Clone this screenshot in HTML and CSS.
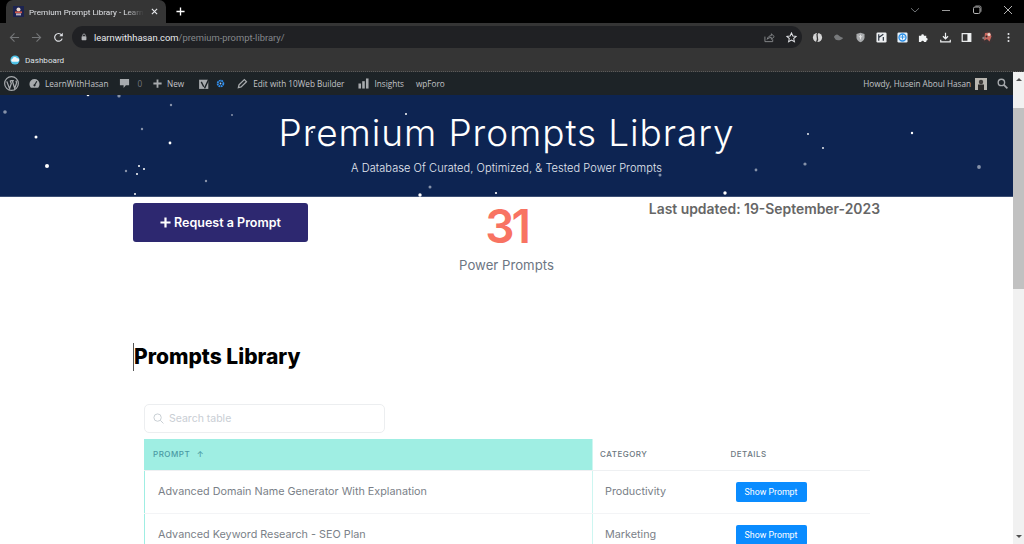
FILE: index.html
```html
<!DOCTYPE html>
<html lang="en">
<head>
  <meta charset="UTF-8">
  <meta name="viewport" content="width=device-width, initial-scale=1.0">
  <title>Premium Prompt Library - LearnWithHasan</title>
  <link rel="stylesheet" href="styles.css">
</head>
<body>
  <!-- browser chrome -->
  <div class="tabstrip">
    <div class="tab">
      <svg class="favicon" viewBox="0 0 11 11"><rect width="11" height="11" fill="#1c2350"/><circle cx="5.5" cy="3.6" r="2" fill="#e8d9d0"/><rect x="2" y="5.4" width="7" height="1.8" fill="#d0584a"/><rect x="3" y="7.4" width="5" height="2" fill="#b9b4c4"/></svg>
      <span class="tab-title">Premium Prompt Library - Learn</span>
      <svg class="tab-close" viewBox="0 0 8 8"><path d="M1 1l6 6M7 1L1 7" stroke="#e8eaed" stroke-width="1.3"/></svg>
    </div>
    <svg class="new-tab" viewBox="0 0 10 10"><path d="M5 .5v9M.5 5h9" stroke="#fff" stroke-width="1.5"/></svg>
    <div class="window-btns">
      <svg class="win-btn" viewBox="0 0 10 10"><path d="M1 3.2l4 3.8 4-3.8" fill="none" stroke="#6f7275" stroke-width="1"/></svg>
      <svg class="win-btn" viewBox="0 0 10 10"><path d="M1 5.5h8" stroke="#9a9a9a" stroke-width="1"/></svg>
      <svg class="win-btn" viewBox="0 0 10 10"><rect x="1.5" y="2" width="6.5" height="6.5" rx="1.4" fill="none" stroke="#b5b5b5" stroke-width="1"/><path d="M3.4 1h4.4A1.3 1.3 0 0 1 9 2.3v4.4" fill="none" stroke="#b5b5b5" stroke-width=".8"/></svg>
      <svg class="win-btn" viewBox="0 0 10 10"><path d="M1 1l8 8M9 1L1 9" stroke="#b5b5b5" stroke-width="1"/></svg>
    </div>
  </div>

  <div class="toolbar">
    <div class="nav-btns">
      <svg class="nav-btn" viewBox="0 0 12 12"><path d="M11 6H1.5M6 1.5L1.5 6 6 10.5" fill="none" stroke="#747678" stroke-width="1.2"/></svg>
      <svg class="nav-btn" viewBox="0 0 12 12"><path d="M1 6h9.5M6 1.5L10.5 6 6 10.5" fill="none" stroke="#747678" stroke-width="1.2"/></svg>
      <svg class="nav-btn" viewBox="0 0 12 12"><path d="M10 7.2A4.2 4.2 0 1 1 9.3 3.2" fill="none" stroke="#dfe1e5" stroke-width="1.3"/><path d="M10.7 .8v3.8H6.9z" fill="#dfe1e5"/></svg>
    </div>
    <div class="omnibox">
      <svg class="lock" viewBox="0 0 8 10"><rect x=".8" y="4" width="6.4" height="5.2" rx=".8" fill="#b4b6b9"/><path d="M2.2 4V2.8a1.8 1.8 0 0 1 3.6 0V4" fill="none" stroke="#b4b6b9"/></svg>
      <span class="url"><span class="url-host">learnwithhasan.com</span>/premium-prompt-library/</span>
      <svg class="omni-icon" viewBox="0 0 12 12"><path d="M1 5v5.5h8.5V8" fill="none" stroke="#8a8c8f" stroke-width="1"/><path d="M3.5 8C4 5.3 6 4 8 4V2l3.2 3L8 8V6C6 6 4.6 6.6 3.5 8z" fill="none" stroke="#8a8c8f" stroke-width="1"/></svg>
      <svg class="omni-icon" viewBox="0 0 12 12"><path d="M6 1l1.5 3.3 3.6.4-2.7 2.4.8 3.5L6 8.8l-3.2 1.8.8-3.5L.9 4.7l3.6-.4z" fill="none" stroke="#dfe1e5" stroke-width="1.1"/></svg>
    </div>
    <div class="ext-icons">
      <svg class="ext" viewBox="0 0 12 12"><circle cx="6" cy="6" r="5" fill="#d5d5d5"/><path d="M6.500 1C3 3.500 8.500 6 5 11" fill="none" stroke="#353535" stroke-width="1.400"/></svg>
      <svg class="ext" viewBox="0 0 12 12"><path d="M1 5.500C2 3 4.500 2 6 3.500 7.500 5 10 6 11 6.500 9.500 9 5 9.500 3 8.500z" fill="#77797b"/></svg>
      <svg class="ext" viewBox="0 0 12 12"><path d="M6 .8l4.400 1.500v3.500C10.400 8.500 8.500 10.300 6 11.200 3.500 10.300 1.600 8.500 1.600 5.800V2.300z" fill="#a9abad"/><path d="M6 3v5M4 4.500l2 1.500 2-1.500" fill="none" stroke="#e6e6e6"/></svg>
      <svg class="ext" viewBox="0 0 12 12"><rect x=".5" y=".5" width="11" height="11" rx="1.500" fill="#eceef0"/><path d="M3 2.500v7M3 6l5-3.500M8 9.500V5.500" fill="none" stroke="#2c3440" stroke-width="1.300"/></svg>
      <svg class="ext" viewBox="0 0 12 12"><rect x=".5" y=".5" width="11" height="11" rx="1.500" fill="#e8f2fb"/><circle cx="6" cy="6" r="3.800" fill="none" stroke="#2b8fe6" stroke-width="1.500"/><path d="M3.500 5.500h5M6 3v5" stroke="#2b8fe6"/></svg>
      <svg class="ext" viewBox="0 0 12 12"><path d="M1 4h2.500a1.500 1.500 0 1 1 3 0H9v2.500a1.500 1.500 0 1 1 0 3V11H6.500a1.500 1.500 0 1 0-3 0H1z" fill="#f1f3f4"/></svg>
      <svg class="ext" viewBox="0 0 12 12"><path d="M6 .8v6.400M3.200 4.600L6 7.400l2.800-2.800M.8 8.500v2.200h10.400V8.500" fill="none" stroke="#eef0f1" stroke-width="1.300"/></svg>
      <svg class="ext" viewBox="0 0 12 12"><rect x="1.300" y="1.800" width="9.400" height="8.400" fill="none" stroke="#f1f3f4" stroke-width="1.300"/><rect x="7" y="1.800" width="3.700" height="8.400" fill="#f1f3f4"/></svg>
      <svg class="ext ext-avatar" viewBox="0 0 14 14"><circle cx="7" cy="7" r="7" fill="#3a3435"/><path d="M5 3l5-.5 1.500 4-2 5-2.500-2.500-3 1.500z" fill="#c9685f"/><circle cx="9" cy="4.500" r="1.500" fill="#e8d5cc"/><circle cx="3.500" cy="8" r="1.200" fill="#8a8184"/><circle cx="6.500" cy="6.500" r="1" fill="#2b2627"/></svg>
      <svg class="ext" viewBox="0 0 12 12"><circle cx="6" cy="2.200" r="1.100" fill="#e8eaed"/><circle cx="6" cy="6" r="1.100" fill="#e8eaed"/><circle cx="6" cy="9.800" r="1.100" fill="#e8eaed"/></svg>
    </div>
  </div>

  <div class="bookmarks">
    <svg class="bm-icon" viewBox="0 0 12 12"><circle cx="6" cy="6" r="5.500" fill="#4fc3e8"/><path d="M2.500 8a1.800 1.800 0 0 1 .5-3.400A2.800 2.800 0 0 1 8.300 4a2 2 0 0 1 1.200 4z" fill="#f4f6f8"/></svg>
    <span>Dashboard</span>
  </div>

  <div class="viewport">
    <div class="site">
      <!-- wp admin bar -->
      <div class="adminbar">
        <div class="ab-group">
          <svg class="ab-wp" viewBox="0 0 14 14"><circle cx="7" cy="7" r="6.400" fill="none" stroke="#a7aaad" stroke-width="1.100"/><path d="M2.600 5l2.600 6.800L6.800 7 5.700 4.300M6 4.300h3.200M7.700 4.300l2.300 7.300 1.600-4.800c.3-1-.1-1.800-.5-2.500" fill="none" stroke="#a7aaad" stroke-width="1.200"/></svg>
          <svg class="ab-icon ab-gauge" viewBox="0 0 12 12"><path d="M2 10.500a5.500 5.500 0 1 1 8 0z" fill="#a7aaad"/><path d="M6 8L8.500 3.500" stroke="#1d2327" stroke-width="1.200"/><circle cx="6" cy="8" r="1.200" fill="#1d2327"/></svg>
          <span class="ab-text">LearnWithHasan</span>
          <svg class="ab-icon ab-comment" viewBox="0 0 12 12"><path d="M1 1h10v7H7.500L5 11V8H1z" fill="#a7aaad"/></svg>
          <span class="ab-text ab-count">0</span>
          <svg class="ab-icon ab-plus" viewBox="0 0 12 12"><path d="M6 1.500v9M1.500 6h9" stroke="#a7aaad" stroke-width="2"/></svg>
          <span class="ab-text">New</span>
          <svg class="ab-icon ab-yoast" viewBox="0 0 12 12"><path d="M1 2.500h8.500V11H1z" fill="#a7aaad"/><path d="M3 4.500L5.300 9M10.500 .8L6 10.500" fill="none" stroke="#1d2327" stroke-width="1.300"/></svg>
          <svg class="ab-icon ab-gear" viewBox="0 0 10 10"><circle cx="5" cy="5" r="3.200" fill="none" stroke="#2f8ff0" stroke-width="2" stroke-dasharray="2 .6"/><circle cx="5" cy="5" r="1" fill="#9cc9f7"/></svg>
          <svg class="ab-icon ab-pencil" viewBox="0 0 12 12"><path d="M1.500 10.500l.7-3L8 1.700l2.300 2.300-5.800 5.800z" fill="none" stroke="#a7aaad" stroke-width="1.400"/></svg>
          <span class="ab-text">Edit with 10Web Builder</span>
          <svg class="ab-icon ab-bars" viewBox="0 0 12 12"><rect x=".5" y="6" width="2.800" height="5.500" fill="#a7aaad"/><rect x="4.600" y="3.500" width="2.800" height="8" fill="#a7aaad"/><rect x="8.700" y=".5" width="2.800" height="11" fill="#a7aaad"/></svg>
          <span class="ab-text">Insights</span>
          <span class="ab-text ab-forum">wpForo</span>
        </div>
        <div class="ab-group">
          <span class="ab-text">Howdy, Husein Aboul Hasan</span>
          <svg class="ab-avatar" viewBox="0 0 12 12"><rect width="12" height="12" fill="#b9b6b0"/><circle cx="6" cy="4" r="2.200" fill="#3d3a38"/><rect x="3" y="6.500" width="6" height="5.500" fill="#2b2928"/></svg>
          <svg class="ab-search" viewBox="0 0 12 12"><circle cx="4.800" cy="4.800" r="3.500" fill="none" stroke="#a7aaad" stroke-width="1.500"/><path d="M7.500 7.500l3.800 3.800" stroke="#a7aaad" stroke-width="1.900"/></svg>
        </div>
      </div>

      <!-- hero -->
      <header class="hero">
        <svg class="stars" viewBox="0 95 1013 102">
          <g fill="#fff">
            <circle cx="36" cy="137" r="1.500"/><circle cx="47" cy="166" r="2"/><circle cx="88" cy="95" r="1.300"/>
            <circle cx="170" cy="143" r="1.400"/><circle cx="139" cy="166" r="1"/><circle cx="144" cy="169" r="1"/>
            <circle cx="137" cy="174" r="1"/><circle cx="135" cy="194" r="1"/><circle cx="312" cy="132" r="1"/>
            <circle cx="406" cy="114" r="1"/><circle cx="420" cy="195" r="1.700"/><circle cx="496" cy="193" r="1.100"/>
            <circle cx="725" cy="193" r="1.700"/><circle cx="912" cy="133" r="1.200"/><circle cx="823" cy="148" r=".9"/>
            <circle cx="808" cy="134" r=".9"/>
          </g>
          <g fill="#fff" opacity=".5">
            <circle cx="5" cy="112" r="1.800"/><circle cx="119" cy="96" r="1.600"/><circle cx="126" cy="171" r="1.200"/>
            <circle cx="171" cy="105" r="1.200"/><circle cx="232" cy="115" r="1"/><circle cx="142" cy="129" r="1.200"/>
            <circle cx="206" cy="181" r="1.200"/><circle cx="430" cy="187" r="1.500"/><circle cx="660" cy="175" r="1.500"/>
            <circle cx="756" cy="170" r="1.400"/><circle cx="805" cy="164" r="1.600"/><circle cx="979" cy="167" r="1.900"/>
            <circle cx="403" cy="170" r="1"/>
          </g>
        </svg>
        <h1 class="hero-title">Premium Prompts Library</h1>
        <p class="hero-sub">A Database Of Curated, Optimized, &amp; Tested Power Prompts</p>
      </header>

      <main class="content">
        <section class="stats">
          <div class="stats-left">
            <a class="request-btn" href="#">
              <svg class="request-plus" viewBox="0 0 12 12"><path d="M6 .5v11M.5 6h11" stroke="#fff" stroke-width="2.400"/></svg>
              Request a Prompt
            </a>
          </div>
          <div class="stats-mid">
            <div class="count">31</div>
            <div class="count-label">Power Prompts</div>
          </div>
          <div class="stats-right">Last updated: 19-September-2023</div>
        </section>

        <h2 class="lib-title">Prompts Library</h2>

        <section class="table-wrap">
          <div class="search">
            <svg class="search-icon" viewBox="0 0 12 12"><circle cx="5" cy="5" r="4" fill="none" stroke="#c4cad0" stroke-width="1"/><path d="M8 8l3.400 3.400" stroke="#c4cad0" stroke-width="1"/></svg>
            <span>Search table</span>
          </div>
          <table class="prompts">
            <thead>
              <tr>
                <th class="col-prompt">PROMPT <span class="sort">↑</span></th>
                <th class="col-cat">CATEGORY</th>
                <th class="col-det">DETAILS</th>
              </tr>
            </thead>
            <tbody>
              <tr>
                <td class="col-prompt">Advanced Domain Name Generator With Explanation</td>
                <td class="col-cat">Productivity</td>
                <td class="col-det"><a class="show-btn" href="#">Show Prompt</a></td>
              </tr>
              <tr>
                <td class="col-prompt">Advanced Keyword Research - SEO Plan</td>
                <td class="col-cat">Marketing</td>
                <td class="col-det"><a class="show-btn" href="#">Show Prompt</a></td>
              </tr>
            </tbody>
          </table>
        </section>
      </main>
    </div>

    <div class="scrollbar">
      <span class="arrow-up"></span>
      <div class="thumb"></div>
      <span class="arrow-down"></span>
    </div>
  </div>
</body>
</html>
```

FILE: styles.css
```css
* {
  box-sizing: border-box;
}
html, body {
  height: 100%;
}
body {
  margin: 0;
  height: 544px;
  overflow: hidden;
  display: flex;
  flex-direction: column;
  background: #fff;
  font-family: "Inter", "Liberation Sans", sans-serif;
}

/* Browser chrome */
.tabstrip {
  height: 23px;
  flex: none;
  background: #000;
  display: flex;
  align-items: flex-end;
  padding-left: 6px;
}
.tab {
  width: 160px;
  height: 23px;
  background: #353535;
  border-radius: 7px 7px 0 0;
  display: flex;
  align-items: center;
  padding: 0 7px;
  color: #dfe1e5;
  font-family: "Roboto", sans-serif;
  font-size: 8.1px;
}
.favicon {
  width: 11px;
  height: 11px;
  margin-right: 5px;
  flex: none;
}
.tab-title {
  flex: 1;
  white-space: nowrap;
  -webkit-mask-image: linear-gradient(to right, #000 84%, transparent 100%);
  mask-image: linear-gradient(to right, #000 84%, transparent 100%);
}
.tab-close {
  width: 7px;
  height: 7px;
  margin: 0 1px 0 7px;
  flex: none;
}
.new-tab {
  width: 9px;
  height: 9px;
  margin: 0 0 7px 10px;
}
.window-btns {
  margin-left: auto;
  display: flex;
  height: 23px;
  align-items: center;
  padding-bottom: 3px;
  padding-right: 11px;
  gap: 21px;
}
.win-btn {
  width: 10px;
  height: 10px;
}
.toolbar {
  height: 25px;
  flex: none;
  background: #353535;
  display: flex;
  align-items: flex-end;
}
.nav-btns {
  width: 72px;
  height: 22px;
  display: flex;
  align-items: center;
  padding-left: 9px;
  gap: 11px;
}
.nav-btn {
  width: 11px;
  height: 11px;
}
.omnibox {
  width: 730px;
  height: 22px;
  background: #202124;
  border-radius: 11px;
  display: flex;
  align-items: center;
  padding: 0 5px 0 9px;
}
.lock {
  width: 6px;
  height: 8px;
  flex: none;
}
.url {
  margin-left: 7px;
  flex: 1;
  font-family: "Roboto", sans-serif;
  font-size: 9.4px;
  color: #85888c;
}
.url-host {
  color: #e8eaed;
}
.omni-icon {
  width: 11px;
  height: 11px;
  margin-left: 11px;
}
.ext-icons {
  flex: 1;
  height: 22px;
  display: flex;
  align-items: center;
  padding-left: 10px;
  gap: 10.300px;
}
.ext {
  width: 11px;
  height: 11px;
  flex: none;
}
.ext-avatar {
  width: 14px;
  height: 14px;
  margin: 0 -2px;
}
.bookmarks {
  height: 24px;
  flex: none;
  background: #353535;
  border-bottom: 1px dotted #5a5a5a;
  display: flex;
  align-items: center;
  padding-left: 10px;
  gap: 5px;
  color: #dfe1e5;
  font-family: "Roboto", sans-serif;
  font-size: 8.1px;
}
.bm-icon {
  width: 10px;
  height: 10px;
}

/* Page area + scrollbar */
.viewport {
  flex: 1;
  display: flex;
  min-height: 0;
}
.site {
  flex: 1;
  min-width: 0;
  overflow: hidden;
}
.scrollbar {
  width: 11px;
  flex: none;
  background: #f1f1f1;
  display: flex;
  flex-direction: column;
  align-items: center;
  padding: 6px 0;
}
.arrow-up, .arrow-down {
  width: 0;
  height: 0;
  border-left: 3px solid transparent;
  border-right: 3px solid transparent;
  flex: none;
}
.arrow-up {
  border-bottom: 3px solid #505050;
}
.arrow-down {
  border-top: 3px solid #505050;
  margin-top: auto;
}
.thumb {
  width: 100%;
  height: 181px;
  margin-top: 27px;
  background: #c1c1c1;
}

/* WP admin bar */
.adminbar {
  height: 23px;
  background: #1d2327;
  display: flex;
  align-items: center;
  justify-content: space-between;
  padding: 0 4px;
  color: #c3c4c7;
  font-family: "Open Sans", sans-serif;
  font-size: 8.2px;
}
.ab-group {
  display: flex;
  align-items: center;
}
.ab-text {
  white-space: nowrap;
}
.ab-wp {
  width: 15px;
  height: 15px;
}
.ab-icon {
  width: 11px;
  height: 11px;
  flex: none;
}
.ab-gauge {
  margin: 0 5px 0 10px;
}
.ab-comment {
  margin: 0 7px 0 11px;
}
.ab-count {
  color: #72777c;
}
.ab-plus {
  margin: 0 4px 0 10px;
}
.ab-yoast {
  margin-left: 14px;
  width: 13px;
  height: 13px;
}
.ab-gear {
  margin-left: 5px;
  width: 9px;
  height: 9px;
}
.ab-pencil {
  margin: 0 5px 0 12px;
}
.ab-bars {
  margin: 0 5px 0 14px;
}
.ab-forum {
  margin-left: 12px;
}
.ab-avatar {
  width: 12px;
  height: 12px;
  margin-left: 4px;
}
.ab-search {
  width: 11px;
  height: 11px;
  margin: 0 1px 0 10px;
}

/* Hero */
.hero {
  position: relative;
  height: 102px;
  background: #0d2452;
  border-bottom: 1px solid #3c4f74;
  color: #fff;
  text-align: center;
  padding-top: 15px;
}
.stars {
  position: absolute;
  top: 0;
  left: 0;
  width: 1013px;
  height: 102px;
}
.hero-title {
  margin: 0;
  font-size: 37px;
  line-height: 46px;
  font-weight: 300;
  letter-spacing: .9px;
}
.hero-sub {
  margin: 5px 0 0;
  font-size: 11px;
  line-height: 14px;
  font-weight: 300;
  letter-spacing: .07px;
  color: #e4e8f0;
}

/* Content */
.content {
  padding: 6px 0 0 133px;
  width: 880px;
}
.stats {
  display: grid;
  grid-template-columns: 249px 249px 249px;
}
.request-btn {
  display: flex;
  align-items: center;
  justify-content: center;
  gap: 3px;
  width: 175px;
  height: 39px;
  background: #2d2870;
  border-radius: 3px;
  color: #fff;
  font-size: 12.500px;
  font-weight: 600;
  text-decoration: none;
}
.request-plus {
  width: 11px;
  height: 11px;
}
.stats-mid {
  text-align: center;
}
.count {
  font-size: 46px;
  line-height: 46px;
  font-weight: 600;
  letter-spacing: -3px;
  color: #f87362;
}
.count-label {
  margin-top: 8px;
  font-size: 13.200px;
  line-height: 16px;
  color: #6d7683;
}
.stats-right {
  text-align: right;
  font-size: 13.900px;
  font-weight: 600;
  line-height: 12px;
  color: #666;
}
.lib-title {
  margin: 70px 0 0;
  height: 28px;
  border-left: 1px solid #555;
  font-size: 21px;
  line-height: 28px;
  font-weight: 800;
  color: #000;
}

/* Table */
.table-wrap {
  margin: 33px 0 0 11px;
  width: 726px;
}
.search {
  width: 241px;
  height: 29px;
  border: 1px solid #eceef0;
  border-radius: 5px;
  display: flex;
  align-items: center;
  padding-left: 8px;
  gap: 5px;
  color: #c9ced4;
  font-size: 10.500px;
}
.search-icon {
  width: 11px;
  height: 11px;
}
.prompts {
  margin-top: 6px;
  width: 726px;
  border-collapse: collapse;
  table-layout: fixed;
}
.prompts th {
  height: 31px;
  padding: 0 0 0 8px;
  text-align: left;
  font-size: 8px;
  font-weight: 500;
  letter-spacing: .5px;
  color: #6c7780;
  border-bottom: 1px solid #eef0f2;
}
.prompts td {
  height: 43px;
  padding: 0 0 0 13px;
  font-size: 10.800px;
  color: #7a7f88;
  border-bottom: 1px solid #f3f4f6;
}
.col-prompt {
  width: 448px;
}
.col-cat {
  width: 130px;
}
.prompts th.col-cat {
  padding-left: 7px;
}
.prompts td.col-cat {
  padding-left: 12px;
}
.prompts .col-prompt {
  border-left: 1px solid #9feee3;
  border-right: 1px solid #cdf6f1;
}
.prompts th.col-prompt {
  background: #9feee3;
  color: #4b9aa3;
}
.sort {
  margin-left: 4px;
}
.show-btn {
  display: inline-block;
  width: 71px;
  height: 20px;
  background: #0a8cff;
  border-radius: 2px;
  color: #fff;
  text-align: center;
  text-decoration: none;
  font-family: "Roboto", sans-serif;
  font-size: 8.800px;
  line-height: 20px;
}
```
